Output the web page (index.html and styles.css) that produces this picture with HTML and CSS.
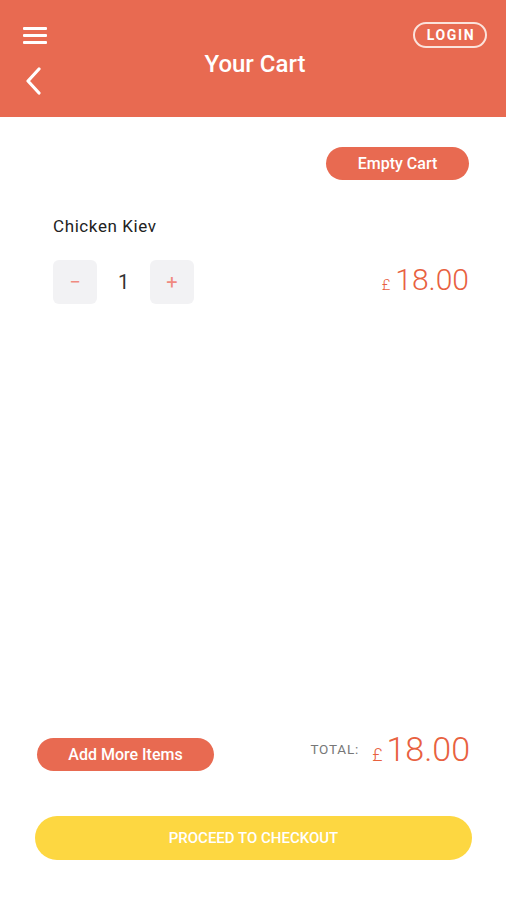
FILE: index.html
```html
<!DOCTYPE html>
<html lang="en">
<head>
    <meta charset="UTF-8">
    <meta name="viewport" content="width=device-width, initial-scale=1.0">
    <title>Your Cart</title>
    <link rel="stylesheet" href="styles.css">
</head>
<body>
    <div class="page">
        <header class="topbar">
            <div class="nav-left">
                <svg class="menu-icon" width="24" height="17" viewBox="0 0 24 17">
                    <rect x="0" y="0" width="24" height="3" rx="1" fill="#fff"/>
                    <rect x="0" y="7" width="24" height="3" rx="1" fill="#fff"/>
                    <rect x="0" y="14" width="24" height="3" rx="1" fill="#fff"/>
                </svg>
                <svg class="back-icon" width="18" height="28" viewBox="0 0 18 28">
                    <polyline points="14,2 3,14 14,26" fill="none" stroke="#fff" stroke-width="3.2" stroke-linecap="round" stroke-linejoin="round"/>
                </svg>
            </div>
            <h1 class="title">Your Cart</h1>
            <div class="nav-right">
                <button class="login">LOGIN</button>
            </div>
        </header>

        <main class="cart">
            <div class="cart-actions">
                <button class="pill">Empty Cart</button>
            </div>

            <div class="item">
                <div class="item-name">Chicken Kiev</div>
                <div class="item-row">
                    <div class="qty">
                        <button class="qty-btn">&minus;</button>
                        <span class="qty-num">1</span>
                        <button class="qty-btn">+</button>
                    </div>
                    <div class="price"><span class="cur">£</span>18.00</div>
                </div>
            </div>

            <div class="spacer"></div>

            <div class="summary">
                <button class="pill add-more">Add More Items</button>
                <div class="total">
                    <span class="total-label">TOTAL:</span>
                    <span class="total-price"><span class="cur">£</span>18.00</span>
                </div>
            </div>

            <button class="checkout">PROCEED TO CHECKOUT</button>
        </main>
    </div>
</body>
</html>
```

FILE: styles.css
```css
body {
    margin: 0;
    font-family: Roboto, "Liberation Sans", sans-serif;
    background: #fff;
}
button {
    font-family: inherit;
    border: none;
    cursor: pointer;
}
.page {
    height: 900px;
    display: flex;
    flex-direction: column;
}
.topbar {
    height: 117px;
    box-sizing: border-box;
    background: #e86a51;
    display: grid;
    grid-template-columns: 1fr auto 1fr;
    padding: 22px 19px 0 23px;
}
.nav-left {
    display: flex;
    flex-direction: column;
    align-items: flex-start;
}
.menu-icon {
    margin-top: 5px;
}
.back-icon {
    margin-top: 23px;
    margin-left: 2px;
}
.title {
    margin: 0;
    padding-top: 29px;
    color: #fff;
    font-size: 24px;
    font-weight: 500;
    line-height: 26px;
}
.nav-right {
    display: flex;
    justify-content: flex-end;
    align-items: flex-start;
}
.login {
    background: transparent;
    border: 2px solid #fbe3dc;
    color: #fff;
    border-radius: 14px;
    height: 26px;
    width: 74px;
    font-size: 14px;
    font-weight: 700;
    letter-spacing: 1.6px;
    padding: 0 0 0 2px;
}
.cart {
    flex: 1;
    display: flex;
    flex-direction: column;
    padding: 30px 34px 40px 35px;
}
.cart-actions {
    display: flex;
    justify-content: flex-end;
    padding-right: 3px;
}
.pill {
    background: #e86a51;
    color: #fff;
    border-radius: 17px;
    height: 33px;
    font-size: 16px;
    font-weight: 500;
    padding: 0;
}
.cart-actions .pill {
    width: 143px;
}
.item {
    padding: 0 3px 0 18px;
}
.item-name {
    margin-top: 36px;
    font-size: 17px;
    color: #222;
    letter-spacing: 0.6px;
}
.item-row {
    margin-top: 24px;
    display: flex;
    justify-content: space-between;
    align-items: center;
}
.qty {
    display: flex;
    align-items: center;
}
.qty-btn {
    width: 44px;
    height: 44px;
    border-radius: 6px;
    background: #f2f2f4;
    color: #f08a80;
    font-size: 20px;
    padding: 0;
}
.qty-num {
    width: 53px;
    text-align: center;
    font-size: 20px;
    color: #333;
}
.price {
    color: #e8613f;
    font-size: 30px;
    font-weight: 300;
    margin-bottom: 5px;
}
.price .cur {
    font-size: 15px;
    margin-right: 5px;
}
.spacer {
    flex: 1;
}
.summary {
    display: flex;
    justify-content: space-between;
    align-items: center;
    padding-left: 2px;
    padding-right: 2px;
}
.add-more {
    width: 177px;
    height: 33px;
}
.total {
    display: flex;
    align-items: center;
    margin-top: -12px;
}
.total-label {
    color: #777;
    font-size: 13.5px;
    letter-spacing: 0.8px;
    margin-right: 13px;
}
.total-price {
    color: #e8613f;
    font-size: 34px;
    font-weight: 300;
}
.total-price .cur {
    font-size: 18px;
    margin-right: 4px;
}
.checkout {
    margin-top: 45px;
    height: 44px;
    border-radius: 22px;
    background: #fdd741;
    color: #fff;
    font-size: 15px;
    font-weight: 500;
}
```
